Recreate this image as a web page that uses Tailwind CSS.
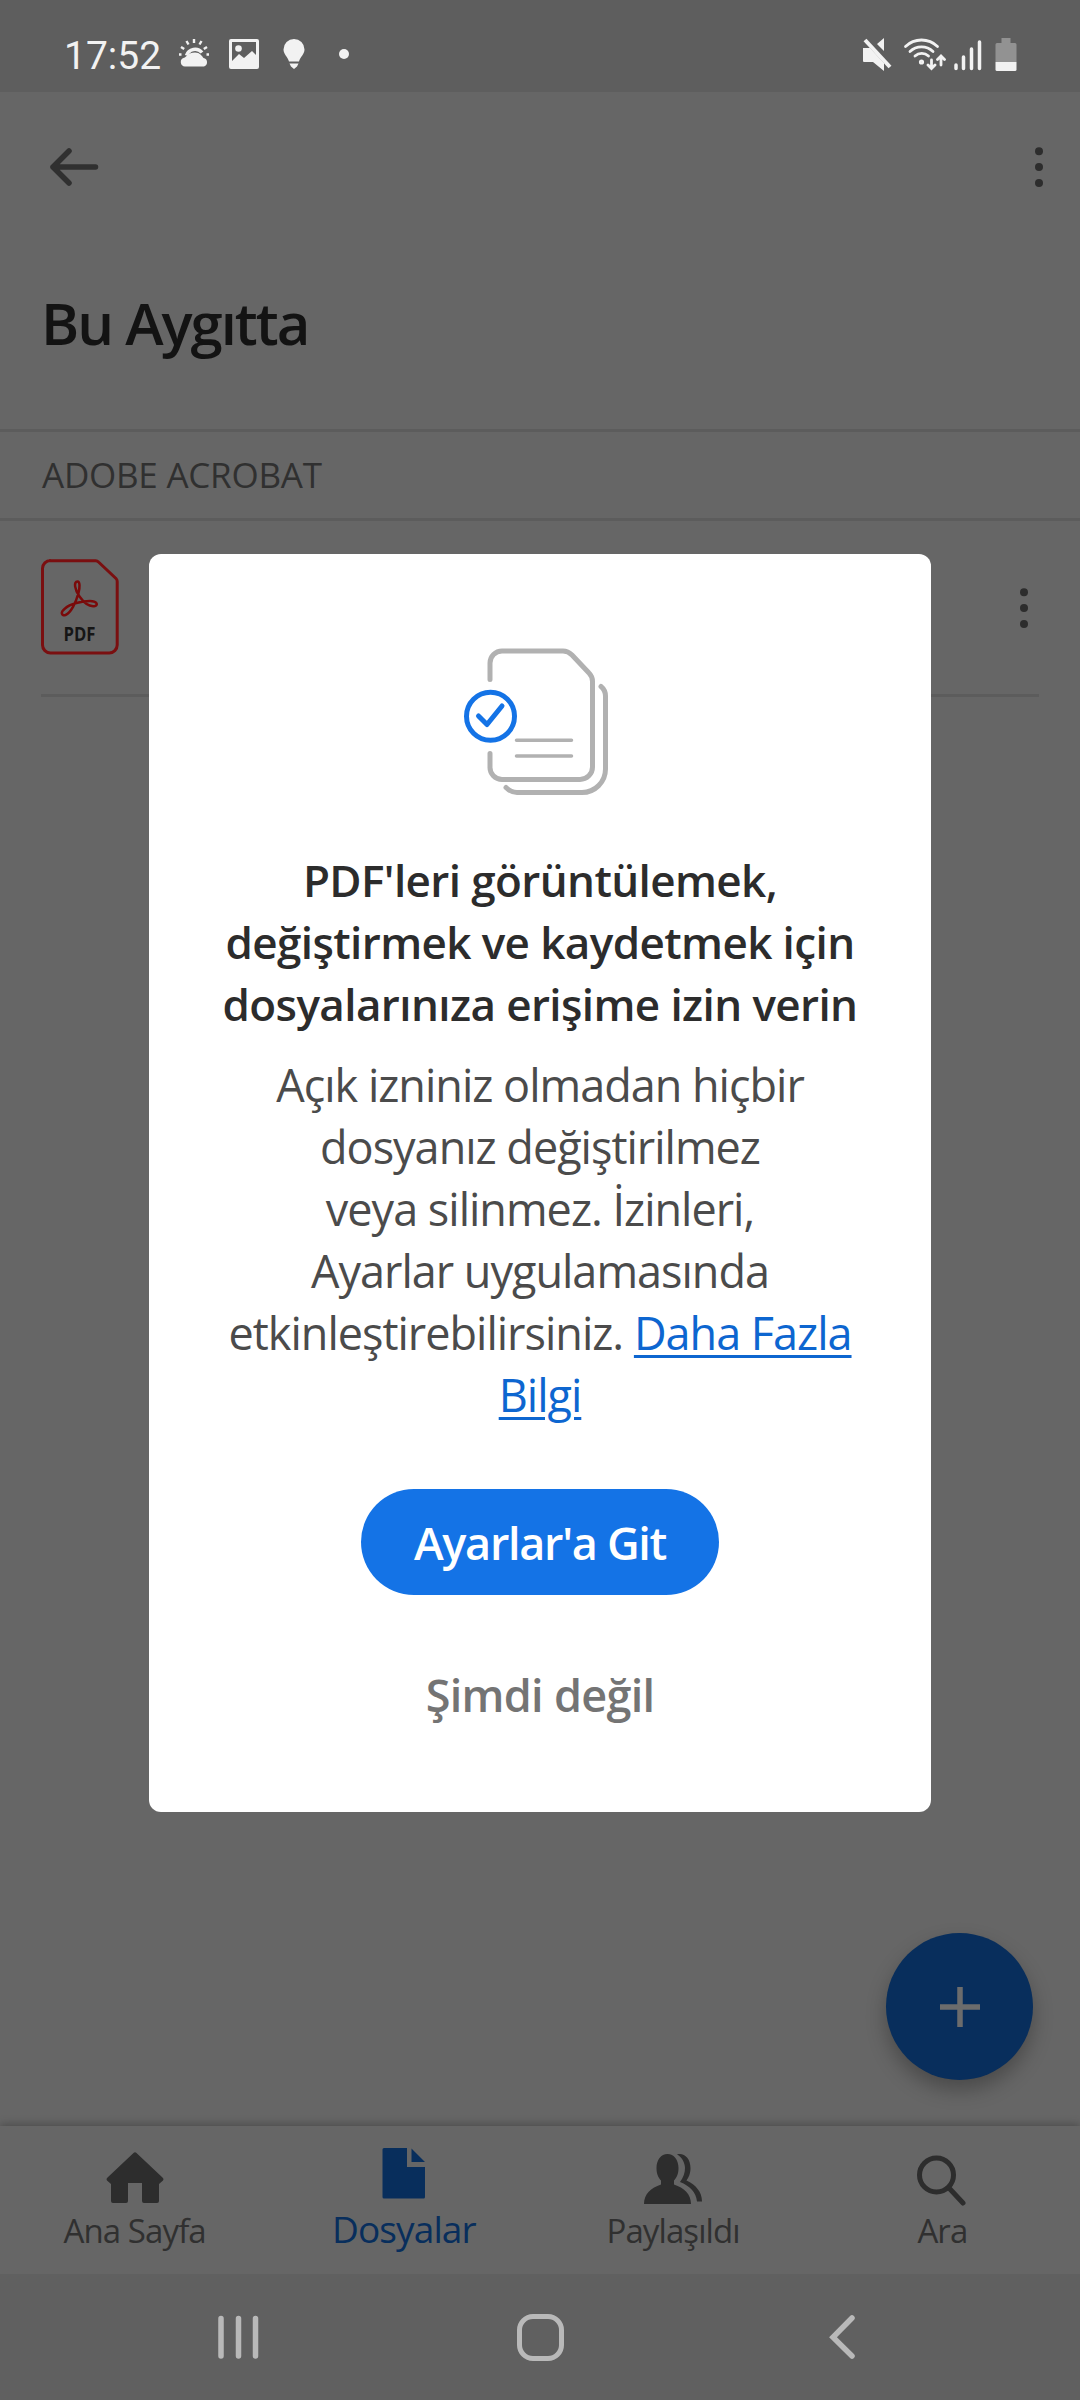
<!DOCTYPE html>
<html lang="tr">
<head>
  <meta charset="UTF-8">
  <meta name="viewport" content="width=device-width, initial-scale=1.0">
  <title>Bu Aygıtta</title>
  <script src="https://cdn.jsdelivr.net/npm/@tailwindcss/browser@4"></script>
</head>
<body class="bg-[#666666] font-['Open_Sans',sans-serif] text-[#303030]">
  <div class="relative w-[1080px] h-[2400px] flex flex-col overflow-hidden">

    <!-- Status bar -->
    <div class="h-[92px] shrink-0 bg-[#5e5e5e] flex items-center justify-between pt-4 pl-[64px] pr-[63px] text-[#f2f2f2]">
      <div class="flex items-center">
        <span class="w-[98px] pt-[3px] whitespace-nowrap font-[Roboto,sans-serif] text-[39px] leading-[46px]">17:52</span>
        <svg class="ml-4 w-8 h-8" viewBox="0 0 32 32" fill="currentColor">
          <path d="M7 28.500a4.500 4.500 0 0 1-1-8.800C8.500 19.500 9.500 14.500 17 14.500c5 0 7 3.500 8.500 5.500a4.400 4.400 0 0 1 .5 8.500z"/>
          <path d="M8.500 17.500a9 9 0 0 1 15.500-3" stroke="currentColor" stroke-width="3.500" fill="none"/>
          <path d="M16 1v4M8.500 3l2 3.500M23.500 3l-2 3.500M3 9l3.200 2M29 9l-3.200 2M1 16.500h2.500M28.500 16.500H31" stroke="currentColor" stroke-width="2.400"/>
        </svg>
        <svg class="ml-[18px] w-8 h-8" viewBox="0 0 32 32" fill="currentColor">
          <path fill-rule="evenodd" d="M3 1h26a2 2 0 0 1 2 2v26a2 2 0 0 1-2 2H3a2 2 0 0 1-2-2V3a2 2 0 0 1 2-2zM4 4v19l7-7 5 4 8-7 4 4V4z"/>
          <circle cx="10.500" cy="10.500" r="3.300"/>
        </svg>
        <svg class="ml-[18px] w-8 h-8" viewBox="0 0 32 32" fill="currentColor">
          <path d="M16 1a10.500 10.500 0 0 1 10.500 10.500c0 5-4.500 7.500-5.500 12H11c-1-4.500-5.500-7-5.500-12A10.500 10.500 0 0 1 16 1zM11.500 25.500h9l-1.500 3-3 2.500-3-2.500z"/>
        </svg>
        <div class="ml-[29px] size-[10px] rounded-full bg-[#f2f2f2]"></div>
      </div>
      <div class="flex items-center">
        <svg class="w-[30px] h-[34px]" viewBox="0 0 30 34" fill="currentColor">
          <path d="M1 11h7l14 15v8l-11-9H2a1 1 0 0 1-1-1zM22 1v13l-7-7z"/>
          <path d="M3 3l25 27" stroke="currentColor" stroke-width="4"/>
        </svg>
        <svg class="ml-[11px] w-[43px] h-[34px]" viewBox="0 0 43 34" fill="none" stroke="currentColor" stroke-width="2.800" stroke-linecap="round">
          <path d="M2.500 9.500a23 23 0 0 1 32 0M7 14.500a16.500 16.500 0 0 1 23 0M12 19a10 10 0 0 1 13.500 0"/>
          <circle cx="18.500" cy="25" r="1.200"/>
          <path d="M28.500 23v8M25 28l3.500 3.500L32 28M38 28v-8M34.500 22.500l3.500-3.500 3.500 3.500"/>
        </svg>
        <svg class="ml-[7px] w-[29px] h-[34px]" viewBox="0 0 29 34" stroke="currentColor" stroke-width="3.500" stroke-linecap="round">
          <path d="M3 28v3.500M10.500 20v11.500M18.500 12v19.500M26.500 5v26.500"/>
        </svg>
        <svg class="ml-[13px] w-[22px] h-[34px]" viewBox="0 0 22 34">
          <path d="M6.500 1h9v5H20a1.500 1.500 0 0 1 1.500 1.500V25h-21V7.500A1.500 1.500 0 0 1 2 6h4.500z" fill="#929292"/>
          <path d="M.5 25h21v7.500A1.500 1.500 0 0 1 20 34H2a1.500 1.500 0 0 1-1.500-1.500z" fill="currentColor"/>
        </svg>
      </div>
    </div>

    <!-- App bar -->
    <div class="h-[150px] shrink-0 flex items-center justify-between pl-[49px] pr-[36px]">
      <svg class="w-[50px] h-[42px]" viewBox="0 0 50 42" fill="none" stroke="#303030" stroke-width="5.500" stroke-linecap="round" stroke-linejoin="round">
        <path d="M46.500 21H4M20 5L4 21l16 16"/>
      </svg>
      <svg class="w-[10px] h-[42px]" viewBox="0 0 10 42" fill="#2d2d2d">
        <circle cx="5" cy="5.300" r="4"/><circle cx="5" cy="21" r="4"/><circle cx="5" cy="37" r="4"/>
      </svg>
    </div>

    <h1 class="h-[187px] shrink-0 pl-[41px] pt-[41px] text-[58px] leading-[80px] font-semibold tracking-[-2px] text-[#131313]">Bu Aygıtta</h1>

    <div class="h-[92px] shrink-0 border-y-[3px] border-[#5c5c5c] pl-[42px] flex items-center text-[35px] tracking-[-0.25px]">ADOBE ACROBAT</div>

    <!-- File row -->
    <div class="h-[176px] shrink-0 mx-[41px] border-b-[3px] border-[#5c5c5c] flex justify-between">
      <svg class="mt-[38px] w-[78px] h-[96px]" viewBox="0 0 78 96" fill="none">
        <path d="M8.500 1.800H54.500a4 4 0 0 1 3 1.200L75 19.500a4 4 0 0 1 1.200 3V86a8 8 0 0 1-8 8H9.500a8 8 0 0 1-8-8V9.500a8 8 0 0 1 8-8z" stroke="#7a0f10" stroke-width="3"/>
        <path d="M36.500 22.500c-4 0-3 8 2 15s11 10.500 15.500 9.500c3.500-1 2-5-5-5-8 0-20 3-25 7.500-5 4-3.500 7.500.5 6.500 5.500-2 10.500-13 13-22 1.500-6 1.500-11.500-1-11.500z" stroke="#7a0a0a" stroke-width="2.500"/>
        <text x="38.500" y="82" text-anchor="middle" textLength="32" lengthAdjust="spacingAndGlyphs" font-size="20" font-weight="700" fill="#161616">PDF</text>
      </svg>
      <svg class="mt-[66px] w-[10px] h-[42px] mr-[10px]" viewBox="0 0 10 42" fill="#2d2d2d">
        <circle cx="5" cy="5.300" r="4"/><circle cx="5" cy="21" r="4"/><circle cx="5" cy="37" r="4"/>
      </svg>
    </div>

    <div class="flex-1"></div>

    <!-- Bottom tabs -->
    <nav class="h-[148px] shrink-0 grid grid-cols-4 pr-[3px] bg-[#666666] text-[33px] leading-[40px] tracking-[-0.9px] shadow-[0_-2px_8px_rgba(0,0,0,0.25)]">
      <div class="flex flex-col items-center">
        <svg class="mt-[24px] w-[60px] h-[56px]" viewBox="0 0 60 56" fill="#2d2d2d">
          <path d="M28.500 3a2 2 0 0 1 3 0L58 28a2 2 0 0 1 0 2.500L54 34v17a2 2 0 0 1-2 2H39a2 2 0 0 1-2-2V33H23v18a2 2 0 0 1-2 2H8a2 2 0 0 1-2-2V34l-4-3.500A2 2 0 0 1 2 28z"/>
        </svg>
        <span class="mt-[5px]">Ana Sayfa</span>
      </div>
      <div class="flex flex-col items-center text-[#082e5c]">
        <svg class="mt-[21px] w-[44px] h-[52px]" viewBox="0 0 44 52" fill="currentColor">
          <path d="M2 1h23v19h18v30a1.500 1.500 0 0 1-1.500 1.500H2A1.500 1.500 0 0 1 .5 50V2.500A1.500 1.500 0 0 1 2 1zM29.500 1.500L43 15H29.500z"/>
        </svg>
        <span class="mt-[10px] text-[37px]">Dosyalar</span>
      </div>
      <div class="flex flex-col items-center">
        <svg class="mt-[26px] w-[60px] h-[54px]" viewBox="0 0 60 54" fill="#2d2d2d">
          <path d="M24.500 2C31 2 35.500 8 35.500 16c0 6-2 10-4.500 12.500v4C41 36 48 42 48 52H1c0-10 7-16 17-19.500v-4c-2.500-2.500-4.500-6.500-4.500-12.500C13.500 8 18 2 24.500 2z"/>
          <path d="M34 2.500c7-2 13.500 4 13.500 13.500 0 6-2 9.500-4 12.500C53 33 59 40 59 49.500h-5C53 40 47 34 37 30c3.500-5 5-9 5-14S39 5 34 2.500z"/>
        </svg>
        <span class="mt-[5px]">Paylaşıldı</span>
      </div>
      <div class="flex flex-col items-center">
        <svg class="mt-[28px] w-[52px] h-[52px]" viewBox="0 0 52 52" fill="none" stroke="#2d2d2d" stroke-width="5" stroke-linecap="round">
          <circle cx="20.500" cy="21" r="17"/><path d="M33 34l14 15"/>
        </svg>
        <span class="mt-[5px]">Ara</span>
      </div>
    </nav>

    <!-- System navigation -->
    <div class="h-[126px] shrink-0 bg-[#606060] flex items-center pl-[216px]">
      <svg class="w-[44px] h-[48px]" viewBox="0 0 44 48" stroke="#b9b9b9" stroke-width="5.500" stroke-linecap="round">
        <path d="M5 5.500v37.500M22.500 5.500v37.500M39.500 5.500v37.500"/>
      </svg>
      <div class="ml-[257px] size-[47px] rounded-[16px] border-[5.500px] border-[#b9b9b9]"></div>
      <svg class="ml-[264px] w-[30px] h-[48px]" viewBox="0 0 30 48" fill="none" stroke="#b9b9b9" stroke-width="5.500" stroke-linecap="round">
        <path d="M24 5L5 24.300 24 43"/>
      </svg>
    </div>

    <!-- Add button -->
    <div class="absolute left-[886px] top-[1933px] size-[147px] rounded-full bg-[#082e5c] flex items-center justify-center shadow-[0_10px_20px_rgba(0,0,0,0.28)]">
      <svg class="size-[42px]" viewBox="0 0 42 42" stroke="#6c6c6c" stroke-width="5.500"><path d="M21 1v40M1 21h40"/></svg>
    </div>

    <!-- Permission dialog -->
    <div class="absolute left-[149px] top-[554px] w-[782px] h-[1258px] rounded-[12px] bg-white flex flex-col items-center text-center text-[44px] leading-[62px]">
      <svg class="mt-[92px] mr-[8px] w-[148px] h-[152px]" viewBox="462 646 148 152" fill="none" stroke="#b1b1b1" stroke-width="5" stroke-linecap="round" stroke-linejoin="round">
        <path d="M490 679.500V663a12 12 0 0 1 12-12h61c4 0 6.500 1.500 9 4l17 18c2.500 2.500 3.500 5 3.500 8.500V767a12.500 12.500 0 0 1-12.500 12.500H502A12 12 0 0 1 490 767V753.500"/>
        <path d="M601 686.500c3 2.500 4.500 6 4.500 9.500V769a23.500 23.500 0 0 1-23.500 23.500h-65c-4 0-8-2-11-5"/>
        <path d="M516.500 740.300H571.500M516.500 756H571.500" stroke-width="3.500"/>
        <circle cx="490.500" cy="716.300" r="24" stroke="#1473e6"/>
        <path d="M478.500 716l8.500 8.500 15-18.500" stroke="#1473e6"/>
      </svg>
      <h2 class="mt-[51px] font-semibold tracking-[-0.6px] text-[#2c2c2c] whitespace-nowrap">
        PDF'leri görüntülemek,<br>değiştirmek ve kaydetmek için<br>dosyalarınıza erişime izin verin
      </h2>
      <p class="mt-[19px] text-[45px] tracking-[-1px] text-[#4b4b4b] whitespace-nowrap">
        Açık izniniz olmadan hiçbir<br>dosyanız değiştirilmez<br>veya silinmez. İzinleri,<br>Ayarlar uygulamasında<br>etkinleştirebilirsiniz. <a class="text-[#0d66d0] underline decoration-[3px] underline-offset-[5px]">Daha Fazla<br>Bilgi</a>
      </p>
      <button class="mt-[63px] pt-[2px] w-[358px] h-[106px] rounded-full bg-[#1473e6] text-white text-[45px] font-semibold tracking-[-1.3px]">Ayarlar'a Git</button>
      <button class="mt-[69px] text-[45px] font-semibold tracking-[-0.7px] text-[#747474]">Şimdi değil</button>
    </div>
  </div>
</body>
</html>
